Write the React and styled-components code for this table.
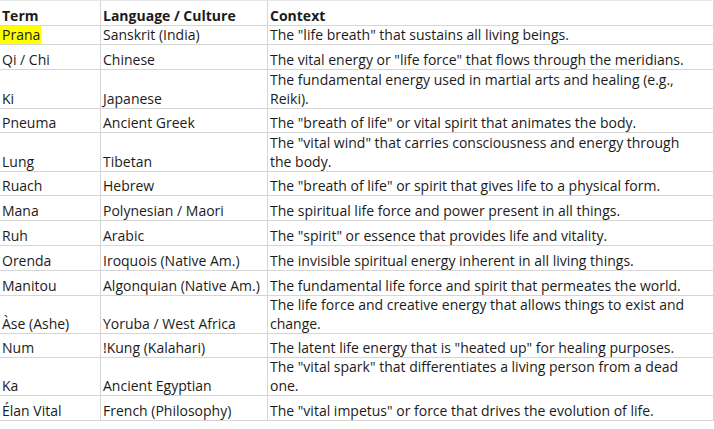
import React from 'react';
import styled, { createGlobalStyle } from 'styled-components';

const colors = {
  text: '#1b1b1b',
  grid: '#d6d6d6',
  mark: '#ffff00',
};

const GlobalStyle = createGlobalStyle`
  *, *::before, *::after {
    box-sizing: border-box;
  }
  html, body {
    margin: 0;
    padding: 0;
    background: #fff;
  }
  body {
    font-family: "Open Sans", "Liberation Sans", sans-serif;
    font-size: 14px;
    color: ${colors.text};
  }
`;

const Sheet = styled.div`
  width: 714px;
  border-top: 1px solid #e6e6e6;
`;

const Row = styled.div`
  display: grid;
  grid-template-columns: 101px 167px 446px;
  height: ${props => props.h}px;
  border-bottom: 1px solid ${colors.grid};
`;

const Cell = styled.div`
  display: flex;
  flex-direction: column;
  justify-content: flex-end;
  padding-left: 2px;
  border-right: 1px solid ${colors.grid};
  line-height: 19px;
  white-space: nowrap;
  font-weight: ${props => (props.head ? 700 : 400)};
  min-width: 0;
  min-height: 0;
`;

const TermCell = styled(Cell)`
  flex-direction: row;
  align-items: flex-end;
  justify-content: flex-start;
`;

const Mark = styled.span`
  align-self: stretch;
  display: flex;
  align-items: flex-end;
  margin-left: -2px;
  padding: 0 1px 0 2px;
  background: ${colors.mark};
`;

const Line = styled.span`
  display: block;
`;

const rows = [
  { term: 'Prana', lang: 'Sanskrit (India)', ctx: ['The "life breath" that sustains all living beings.'], h: 19, mark: true },
  { term: 'Qi / Chi', lang: 'Chinese', ctx: ['The vital energy or "life force" that flows through the meridians.'], h: 25 },
  {
    term: 'Ki',
    lang: 'Japanese',
    ctx: ['The fundamental energy used in martial arts and healing (e.g.,', 'Reiki).'],
    h: 39,
  },
  { term: 'Pneuma', lang: 'Ancient Greek', ctx: ['The "breath of life" or vital spirit that animates the body.'], h: 24 },
  {
    term: 'Lung',
    lang: 'Tibetan',
    ctx: ['The "vital wind" that carries consciousness and energy through', 'the body.'],
    h: 39,
  },
  { term: 'Ruach', lang: 'Hebrew', ctx: ['The "breath of life" or spirit that gives life to a physical form.'], h: 24 },
  { term: 'Mana', lang: 'Polynesian / Maori', ctx: ['The spiritual life force and power present in all things.'], h: 25 },
  { term: 'Ruh', lang: 'Arabic', ctx: ['The "spirit" or essence that provides life and vitality.'], h: 25 },
  { term: 'Orenda', lang: 'Iroquois (Native Am.)', ctx: ['The invisible spiritual energy inherent in all living things.'], h: 25 },
  { term: 'Manitou', lang: 'Algonquian (Native Am.)', ctx: ['The fundamental life force and spirit that permeates the world.'], h: 25 },
  {
    term: 'Àse (Ashe)',
    lang: 'Yoruba / West Africa',
    ctx: ['The life force and creative energy that allows things to exist and', 'change.'],
    h: 38,
  },
  { term: 'Num', lang: '!Kung (Kalahari)', ctx: ['The latent life energy that is "heated up" for healing purposes.'], h: 24 },
  {
    term: 'Ka',
    lang: 'Ancient Egyptian',
    ctx: ['The "vital spark" that differentiates a living person from a dead', 'one.'],
    h: 38,
  },
  { term: 'Élan Vital', lang: 'French (Philosophy)', ctx: ['The "vital impetus" or force that drives the evolution of life.'], h: 25 },
];

const App = () => (
  <React.Fragment>
    <GlobalStyle />
    <Sheet>
      <Row h={25}>
        <Cell head>Term</Cell>
        <Cell head>Language / Culture</Cell>
        <Cell head>Context</Cell>
      </Row>
      {rows.map(row => (
        <Row key={row.term} h={row.h}>
          <TermCell>{row.mark ? <Mark>{row.term}</Mark> : row.term}</TermCell>
          <Cell>{row.lang}</Cell>
          <Cell>
            {row.ctx.map((line, i) => (
              <Line key={i}>{line}</Line>
            ))}
          </Cell>
        </Row>
      ))}
    </Sheet>
  </React.Fragment>
);

export default App;
